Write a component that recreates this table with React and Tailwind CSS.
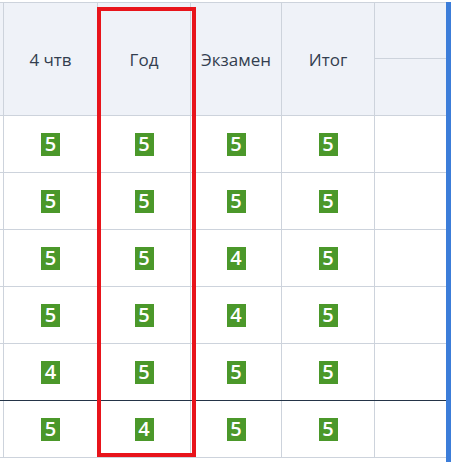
const cols = [
  { title: '4 чтв', w: 'w-[94px]' },
  { title: 'Год', w: 'w-[93px]' },
  { title: 'Экзамен', w: 'w-[91px]' },
  { title: 'Итог', w: 'w-[93px]' },
];

const rows = [
  [5, 5, 5, 5],
  [5, 5, 5, 5],
  [5, 5, 4, 5],
  [5, 5, 4, 5],
  [4, 5, 5, 5],
  [5, 4, 5, 5],
];

const Mark = ({ v }) => (
  <span className="flex h-[23px] w-[19px] items-center justify-center bg-[#4b982a] text-[20px] font-semibold leading-none text-white">
    {v}
  </span>
);

const App = () => {
  return (
    <div className="relative h-[462px] w-[451px] overflow-hidden bg-white font-['Open_Sans',sans-serif] text-[#333e4f]">
      <div className="flex pt-[2px]">
        <div className="flex-1">
          {/* header */}
          <div className="flex h-[114px] border-y border-[#cdd3dc] bg-[#eff2f8]">
            <div className="w-[3px]" />
            {cols.map((c) => (
              <div key={c.title} className={`${c.w} flex items-center justify-center border-l border-[#cdd3dc] pt-[2px] text-[17px] whitespace-nowrap`}>
                {c.title}
              </div>
            ))}
            <div className="flex flex-1 flex-col border-l border-[#cdd3dc]">
              <div className="h-[56px] border-b border-[#cdd3dc]" />
              <div className="flex-1" />
            </div>
          </div>

          {rows.map((r, i) => (
            <div
              key={i}
              className={`flex h-[57px] border-b ${i === 4 ? 'border-[#243447]' : 'border-[#cdd3dc]'}`}
            >
              <div className="w-[3px]" />
              {r.map((v, j) => (
                <div key={j} className={`${cols[j].w} flex items-center justify-center border-l border-[#cdd3dc]`}>
                  <Mark v={v} />
                </div>
              ))}
              <div className="flex-1 border-l border-[#cdd3dc]" />
            </div>
          ))}
        </div>
        <div className="h-[462px] w-[5px] bg-[#3c7dd9]" />
      </div>

      {/* highlight */}
      <div className="absolute left-[97px] top-[7px] h-[450px] w-[99px] border-4 border-[#e8141b]" />
    </div>
  );
};

export default App;
